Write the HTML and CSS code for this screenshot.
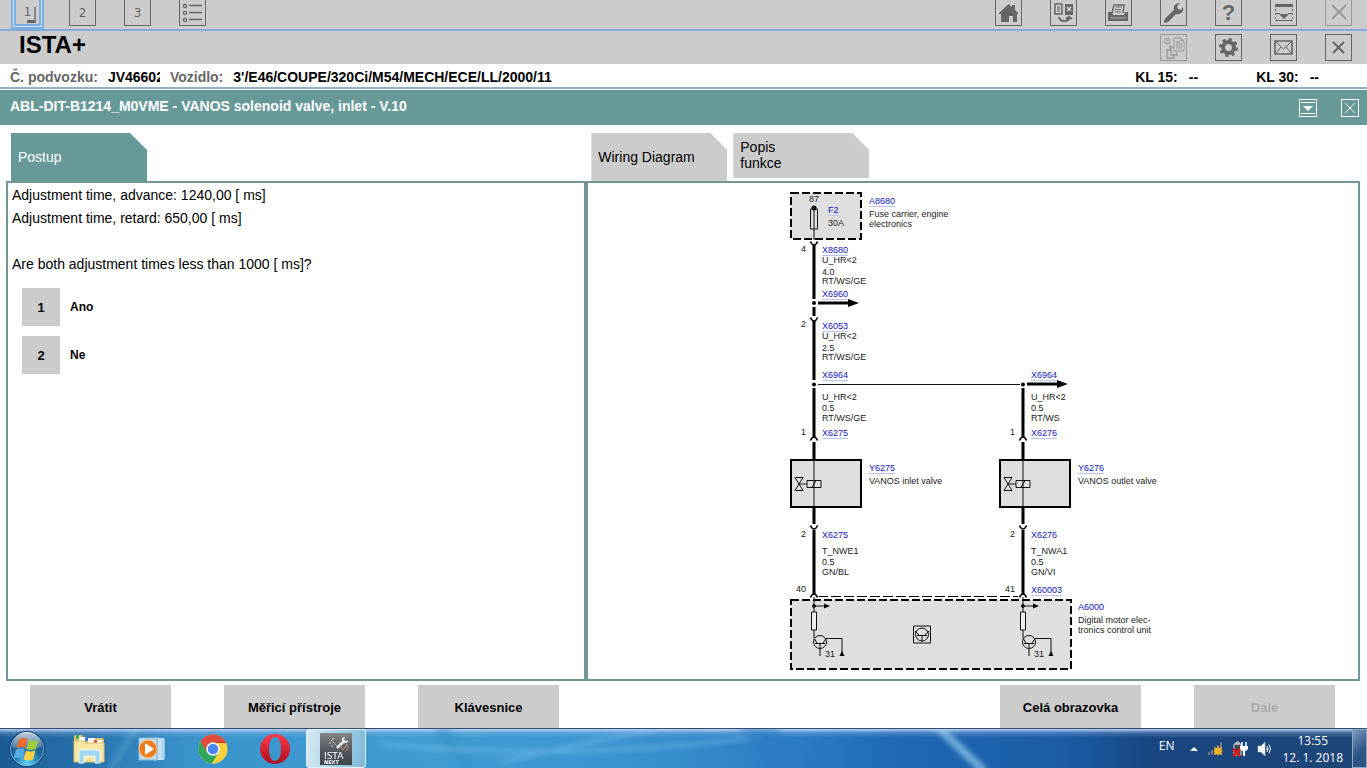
FILE: index.html
```html
<!DOCTYPE html>
<html lang="cs">
<head>
<meta charset="utf-8">
<title>ISTA+</title>
<meta name="viewport" content="width=device-width, initial-scale=1">
<link rel="stylesheet" href="styles.css">
</head>
<body>
<header>
  <div class="toolbar toolbar-top">
    <div class="tools">
      <button class="tool tool-active" type="button">1<span class="corner"></span></button>
      <button class="tool" type="button">2</button>
      <button class="tool" type="button">3</button>
      <button class="tool" type="button" aria-label="List">
        <svg class="icon" viewBox="0 0 25 25"><g fill="none" stroke="#666" stroke-width="1.3"><circle cx="5" cy="6" r="1.6"/><circle cx="5" cy="13" r="1.6"/><circle cx="5" cy="20" r="1.6"/><path d="M9 5.500h13M9 12.500h13M9 19.500h13"/></g></svg>
      </button>
    </div>
    <div class="tools">
      <button class="tool" type="button" aria-label="Home">
        <svg class="icon" viewBox="0 0 25 25"><path d="M12.500 4 3 13v1h2v8h8v-6h4v6h4v-8h1v-1l-3-3V5h-3v2z" fill="#666"/><path d="M14 16h3v3h-3z" fill="#ccc"/></svg>
      </button>
      <button class="tool" type="button" aria-label="Switch">
        <svg class="icon" viewBox="0 0 25 25"><path d="M4 4h7v10H4z" fill="none" stroke="#666" stroke-width="1.500"/><path d="M6 7h3M6 9h3M6 11h3" stroke="#666"/><path d="M14 4h8v11h-8z" fill="#666"/><path d="m16 7 4 4m0-4-4 4" stroke="#ddd" stroke-width="1.300"/><path d="M8 17q1 4 5 4 5 0 5-3M15 19l3-2 3 2" fill="none" stroke="#666" stroke-width="2"/></svg>
      </button>
      <button class="tool" type="button" aria-label="Print">
        <svg class="icon" viewBox="0 0 25 25"><path d="M6 13 8 5h10l-1 8" fill="none" stroke="#666" stroke-width="1.500"/><path d="M10 7h6M9 9.500h6M9 12h6" stroke="#666"/><path d="M2 12h4l1 3h11l1-3h3v9H2z" fill="#666"/><path d="M4 18h16" stroke="#aaa"/></svg>
      </button>
      <button class="tool" type="button" aria-label="Tools">
        <svg class="icon" viewBox="0 0 25 25"><path d="M4 18.500 13 10q-1-4 2-6 2-1.500 4-1l-3 3 1 3 3 1 2-3q1 4-2 6t-5 1l-8 8-3 1-1-1z" fill="#666"/></svg>
      </button>
      <button class="tool tool-help" type="button">?</button>
      <button class="tool" type="button" aria-label="Minimize">
        <svg class="icon" viewBox="0 0 25 25"><path d="M4 4h18v3H4zM8 14h10l-5 5z" fill="#666"/><path d="M4.500 9v11M21.500 9v11" stroke="#666" stroke-dasharray="2 2"/><path d="M4 13.500h5m8 0h5M4 20.500h18" stroke="#666"/></svg>
      </button>
      <button class="tool tool-disabled" type="button" aria-label="Close session" disabled>
        <svg class="icon" viewBox="0 0 25 25"><path d="m6 5 14 14m0-14L6 19" stroke="#999" stroke-width="2"/></svg>
      </button>
    </div>
  </div>
  <div class="toolbar toolbar-brand">
    <h1 class="brand">ISTA+</h1>
    <div class="tools">
      <button class="tool tool-disabled" type="button" aria-label="History" disabled>
        <svg class="icon" viewBox="0 0 25 25"><g fill="none" stroke="#999"><circle cx="6" cy="6" r="3"/><path d="M6 4v2h2M13 3h7l3 3v10H13zM20 3v3h3M15 7h4M15 9h6M15 11h6M15 13h6"/><path d="M13 12h-3v8h6v-3M10 15H6v8h7v-3M9 10v5" stroke-width="1.300"/></g></svg>
      </button>
      <button class="tool" type="button" aria-label="Settings">
        <svg class="icon" viewBox="0 0 25 25"><circle cx="12.500" cy="12.500" r="5.500" fill="none" stroke="#666" stroke-width="4"/><circle cx="12.500" cy="12.500" r="8" fill="none" stroke="#666" stroke-width="3" stroke-dasharray="3.140 3.140"/></svg>
      </button>
      <button class="tool" type="button" aria-label="Message">
        <svg class="icon" viewBox="0 0 25 25"><path d="M4 6h17v13H4z" fill="none" stroke="#666" stroke-width="1.600"/><path d="m4 6 8.500 8L21 6M5 18l5-6m10 6-5-6" fill="none" stroke="#666"/></svg>
      </button>
      <button class="tool" type="button" aria-label="Close">
        <svg class="icon" viewBox="0 0 25 25"><path d="m7 7 11 11m0-11L7 18" stroke="#666" stroke-width="2"/></svg>
      </button>
    </div>
  </div>
  <div class="info">
    <span class="info-label">Č. podvozku:</span>
    <span class="info-vin">JV46602</span>
    <span class="info-label">Vozidlo:</span>
    <span class="info-car">3'/E46/COUPE/320Ci/M54/MECH/ECE/LL/2000/11</span>
    <span class="info-kl">KL 15:<span>--</span></span>
    <span class="info-kl">KL 30:<span>--</span></span>
  </div>
  <div class="titlebar">
    <h2 class="title">ABL-DIT-B1214_M0VME - VANOS solenoid valve, inlet - V.10</h2>
    <div class="title-actions">
      <button class="small-tool" type="button" aria-label="Collapse">
        <svg class="icon" viewBox="0 0 16 16"><path d="M1 2.500h14M1 13.500h14" stroke="#fff"/><path d="M3 6h10l-5 5z" fill="#fff"/></svg>
      </button>
      <button class="small-tool" type="button" aria-label="Close document">
        <svg class="icon" viewBox="0 0 16 16"><path d="m3 3 10 10m0-10L3 13" stroke="#fff"/></svg>
      </button>
    </div>
  </div>
</header>

<main class="work">
  <section class="column">
    <div class="tabs"><button class="tab tab-active" type="button">Postup</button></div>
    <div class="panel steps">
      <p>Adjustment time, advance: 1240,00 [ ms]</p>
      <p>Adjustment time, retard: 650,00 [ ms]</p>
      <p class="question">Are both adjustment times less than 1000 [ ms]?</p>
      <div class="answer"><button class="answer-key" id="a1" type="button">1</button><label for="a1">Ano</label></div>
      <div class="answer"><button class="answer-key" id="a2" type="button">2</button><label for="a2">Ne</label></div>
    </div>
  </section>
  <section class="column">
    <div class="tabs">
      <button class="tab" type="button">Wiring Diagram</button>
      <button class="tab tab-short" type="button">Popis<br>funkce</button>
    </div>
    <div class="panel diagram">
      <svg class="wiring" viewBox="773 183 400 496" role="img" aria-label="Wiring Diagram">
        <defs>
          <g id="cup"><path d="M-5-4h10v5H-5z" fill="#fff"/><path d="M-3.500-2.500Q-2 1 0 1T3.500-2.500" fill="none" stroke="#000" stroke-width="1.600"/></g>
          <g id="cap"><path d="M-5-1h10v5H-5z" fill="#fff"/><path d="M-3.500 2.500Q-2-1 0-1T3.500 2.500" fill="none" stroke="#000" stroke-width="1.600"/></g>
          <g id="valve">
            <path d="M-23 0h70v47h-70z" fill="#dfdfdf" stroke="#000" stroke-width="2"/>
            <path d="M0 0v47M-19 17.500h8l-8 13h8zM-15 24h8M-7 20.500H7v7H-7zM-2 27.500l4-7" fill="none" stroke="#111"/>
          </g>
          <g id="driver" fill="none" stroke="#111">
            <path d="M0-3v15M0 30v8l3 5M0 6h11"/><path d="M10 3.500v5l6-2.500z" fill="#000" stroke="none"/><circle cy="6" r="1.500" fill="#000"/>
            <path d="M-2.500 12h5v18h-5z" fill="#eee"/><circle cx="6" cy="42" r="6.500"/>
            <path d="M1 43.500h10M6 43.500V56M9 43l3-4.500h16V54"/><path d="m25.500 56 2.500-5 2.500 5z" fill="#000" stroke="none"/>
          </g>
          <g id="branch"><path d="M4 0h31" stroke="#000" stroke-width="3"/><path d="M34-4v8l11-4z" fill="#000"/></g>
        </defs>
        <path d="M791 193h70v46h-70z" class="unit"/>
        <path d="M791 600h280v69H791z" class="unit"/>
        <path d="M818 596.500h202" fill="none" stroke="#000" stroke-dasharray="10 3"/>
        <path d="M810.500 209h7v20h-7zM814 207v35" fill="none" stroke="#111"/><circle cx="814" cy="208" r="2.500"/>
        <path d="M814 245v54M814 307v9M814 321v59M814 388v49M814 441v19M814 508v17M814 530v64M1023 388v49M1023 441v19M1023 508v17M1023 530v64" stroke="#000" stroke-width="3"/>
        <circle cx="814" cy="303" r="2"/><circle cx="814" cy="384.500" r="2"/><circle cx="1023" cy="384.500" r="2"/>
        <path d="M818 384.500h202" stroke="#111"/>
        <use href="#branch" x="814" y="303"/><use href="#branch" x="1023" y="384"/>
        <use href="#cup" x="814" y="244"/><use href="#cup" x="814" y="320"/><use href="#cup" x="814" y="528"/><use href="#cup" x="1023" y="528"/>
        <use href="#cap" x="814" y="438"/><use href="#cap" x="1023" y="438"/><use href="#cap" x="814" y="595"/><use href="#cap" x="1023" y="595"/>
        <use href="#valve" x="814" y="460"/><use href="#valve" x="1023" y="460"/>
        <use href="#driver" x="814" y="600"/><use href="#driver" x="1023" y="600"/>
        <g fill="none" stroke="#111"><path d="M913.500 626h17v17h-17z"/><circle cx="922" cy="634.500" r="6.500"/><path d="M917 635.500h10M922 635.500v6M919 635l-4-4M925 635l4-4"/></g>
        <g class="note">
          <text x="809" y="202">87</text><text x="828" y="226">30A</text>
          <text x="869" y="217">Fuse carrier, engine</text><text x="869" y="227">electronics</text>
          <text x="801" y="252">4</text><text x="822" y="263">U_HR&lt;2</text><text x="822" y="275">4.0</text><text x="822" y="284">RT/WS/GE</text>
          <text x="801" y="327">2</text><text x="822" y="339">U_HR&lt;2</text><text x="822" y="351">2.5</text><text x="822" y="360">RT/WS/GE</text>
          <text x="822" y="400">U_HR&lt;2</text><text x="822" y="411">0.5</text><text x="822" y="421">RT/WS/GE</text>
          <text x="1031" y="400">U_HR&lt;2</text><text x="1031" y="411">0.5</text><text x="1031" y="421">RT/WS</text>
          <text x="801" y="435">1</text><text x="1010" y="435">1</text>
          <text x="869" y="484">VANOS inlet valve</text><text x="1078" y="484">VANOS outlet valve</text>
          <text x="801" y="537">2</text><text x="1010" y="537">2</text>
          <text x="822" y="554">T_NWE1</text><text x="822" y="565">0.5</text><text x="822" y="575">GN/BL</text>
          <text x="1031" y="554">T_NWA1</text><text x="1031" y="565">0.5</text><text x="1031" y="575">GN/VI</text>
          <text x="796" y="592">40</text><text x="1005" y="592">41</text>
          <text x="825" y="657">31</text><text x="1034" y="657">31</text>
          <text x="1078" y="623">Digital motor elec-</text><text x="1078" y="633">tronics control unit</text>
        </g>
        <g class="ref">
          <a href="#F2"><text x="828" y="213">F2</text></a>
          <a href="#A8680"><text x="869" y="204">A8680</text></a>
          <a href="#X8680"><text x="822" y="253">X8680</text></a>
          <a href="#X6960"><text x="822" y="297">X6960</text></a>
          <a href="#X6053"><text x="822" y="329">X6053</text></a>
          <a href="#X6964"><text x="822" y="378">X6964</text></a>
          <a href="#X6964"><text x="1031" y="378">X6964</text></a>
          <a href="#X6275"><text x="822" y="436">X6275</text></a>
          <a href="#X6276"><text x="1031" y="436">X6276</text></a>
          <a href="#Y6275"><text x="869" y="471">Y6275</text></a>
          <a href="#Y6276"><text x="1078" y="471">Y6276</text></a>
          <a href="#X6275"><text x="822" y="538">X6275</text></a>
          <a href="#X6276"><text x="1031" y="538">X6276</text></a>
          <a href="#X60003"><text x="1031" y="593">X60003</text></a>
          <a href="#A6000"><text x="1078" y="610">A6000</text></a>
        </g>
        <path d="M828 215.500h11M869 206.500h26M822 255.500h26M822 299.500h26M822 331.500h26M822 380.500h26M1031 380.500h26M822 438.500h26M1031 438.500h26M869 473.500h26M1078 473.500h26M1031 595.500h31" stroke="#b9c6f2"/>
      </svg>
    </div>
  </section>
</main>

<footer class="actions">
  <div class="action-group">
    <button class="action" type="button">Vrátit</button>
    <button class="action" type="button">Měřicí přístroje</button>
    <button class="action" type="button">Klávesnice</button>
  </div>
  <div class="action-group">
    <button class="action" type="button">Celá obrazovka</button>
    <button class="action" type="button" disabled>Dále</button>
  </div>
</footer>

<nav class="taskbar">
  <svg class="streaks" viewBox="0 0 1367 40" preserveAspectRatio="none" aria-hidden="true">
    <defs><filter id="soft"><feGaussianBlur stdDeviation="3"/></filter></defs>
    <g filter="url(#soft)" fill="none" stroke="#8fd0f5">
      <path d="M110 42 135 0" stroke-width="4" opacity=".4"/><path d="M440 0 470 40" stroke="#2a86bd" stroke-width="12" opacity=".4"/>
      <path d="M500 34Q600 10 660 0M380 15Q560 34 760 8" stroke-width="4" opacity=".4"/>
      <path d="m740 0 30 44 40-4-34-40z" fill="#2b7ac5" stroke="none" opacity=".6"/>
      <path d="m940 0 45 44" stroke="#b5e2ff" stroke-width="8" opacity=".6"/>
    </g>
  </svg>
  <div class="launchers">
    <button class="launch launch-start" type="button" aria-label="Start">
      <svg width="38" height="38" viewBox="0 0 38 38">
        <defs>
          <radialGradient id="orb" cx=".5" cy=".9" r=".9"><stop offset="0" stop-color="#59d5f5"/><stop offset=".45" stop-color="#1b6ba4"/><stop offset="1" stop-color="#174870"/></radialGradient>
          <linearGradient id="gloss" x2="0" y2="1"><stop offset="0" stop-color="#fff" stop-opacity=".75"/><stop offset="1" stop-color="#fff" stop-opacity=".15"/></linearGradient>
        </defs>
        <circle cx="19" cy="19" r="17.500" fill="url(#orb)" stroke="#0d3d66"/><circle cx="19" cy="19" r="16.500" fill="none" stroke="#9fc9e6" opacity=".7"/>
        <path d="M4 17a15 15 0 0 1 30 0Q19 22 4 17z" fill="url(#gloss)"/>
        <path d="M11 9q4-2 8.500 0l-2.500 9q-4-2-8.500 0z" fill="#ee6a2c"/><path d="M21 10q4 2 9.500 0l-2.500 9q-5 2-9.500 0z" fill="#9ccc3c"/>
        <path d="M8 19.500q4-2 8.500 0l-2.500 9q-4-2-8.500 0z" fill="#55aee8"/><path d="M18 20.500q4 2 9.500 0l-2.500 9q-5 2-9.500 0z" fill="#fbd041"/>
      </svg>
    </button>
    <button class="launch" type="button" aria-label="Explorer">
      <svg width="34" height="32" viewBox="0 0 34 32">
        <path d="M2 4q0-2 2-2h6l2 3h18q2 0 2 2v18H2z" fill="#e3c46a"/><path d="M7 4h7v5H7zM16 5h7v5h-7zM24 7h6v4h-6z" fill="#fff"/><path d="M4 2h3v4H4z" fill="#3fae49"/><path d="M13 5h3v3h-3z" fill="#3a78d0"/><path d="M22 7h3v3h-3z" fill="#d4503c"/>
        <path d="M2 8h10l2 2h18v19H2z" fill="#f8e7a4" stroke="#d9bd67"/><path d="M7 30V19q0-2 2-2h17q2 0 2 2v11h-5v-7H12v7z" fill="#9fd7f3" stroke="#e7f7ff"/>
      </svg>
    </button>
    <button class="launch" type="button" aria-label="Media player">
      <svg width="28" height="26" viewBox="0 0 28 26">
        <path d="m17 2 10 1v20l-10 1z" fill="#9ccbea" stroke="#e6f4fc"/><path d="M2 2h18v22H2z" fill="#bddcf0" stroke="#8db8d5"/><path d="M22 3v20M24 3v20" stroke="#e9f5fc"/>
        <circle cx="11" cy="13" r="9" fill="#ef7c1c" stroke="#fbc27d"/><path d="m8 7 9 6-9 6z" fill="#fff"/>
      </svg>
    </button>
    <button class="launch" type="button" aria-label="Chrome">
      <svg width="30" height="30" viewBox="0 0 30 30">
        <circle cx="15" cy="15" r="14.500" fill="#fdd23c"/><path d="M2.400 7.800A14.500 14.500 0 0 1 27.600 7.800L28 8.500H15L9 18.500z" fill="#e04a3c"/>
        <path d="M2.400 7.800A14.500 14.500 0 0 0 14 29.500l6.500-11h-11z" fill="#2fa65a"/>
        <path d="M15 8.500h13" stroke="#b73a2e"/><circle cx="15" cy="15" r="6.800" fill="#fff"/><circle cx="15" cy="15" r="5.300" fill="#4c86ee"/>
      </svg>
    </button>
    <button class="launch" type="button" aria-label="Opera">
      <svg width="30" height="30" viewBox="0 0 30 30">
        <defs><linearGradient id="opera" x2="0" y2="1"><stop offset="0" stop-color="#ff3b4b"/><stop offset="1" stop-color="#ad0b1c"/></linearGradient></defs>
        <path fill-rule="evenodd" d="M15 0a15 15 0 1 0 0 30 15 15 0 0 0 0-30zm0 3c4 0 6 5 6 12s-2 12-6 12-6-5-6-12 2-12 6-12z" fill="url(#opera)"/>
      </svg>
    </button>
    <button class="launch launch-running" type="button" aria-label="ISTA NEXT">
      <svg width="32" height="32" viewBox="0 0 32 32">
        <defs><linearGradient id="tile" x2="0" y2="1"><stop offset="0" stop-color="#858585"/><stop offset=".5" stop-color="#555b60"/><stop offset="1" stop-color="#3e454b"/></linearGradient></defs>
        <path d="M0 0h32v32H0z" fill="url(#tile)"/><path d="m16 14 6-6q-1-4 3-4l-1 3 2 1 2-1q0 4-4 3l-6 6z" fill="#e5e5e5"/>
        <path d="m11 7 7 7M9 10h3m1-5v3m-2 5h3" stroke="#d8d8d8" stroke-dasharray="2 1"/><path d="m20 12 3 5 4-6v7" fill="none" stroke="#c58b6a"/>
        <text x="4" y="26" class="tile-name">ISTA</text><text x="4" y="31" class="tile-sub">NEXT</text>
      </svg>
    </button>
  </div>
  <div class="tray">
    <span class="lang">EN</span>
    <svg width="8" height="5" viewBox="0 0 8 5"><path d="M0 5h8L4 1z" fill="#fff"/></svg>
    <svg width="16" height="16" viewBox="0 0 16 16"><path d="M1 11h2v3H1zM4 9h2v5H4zM7 7h2v7H7zM10 4h2v10h-2zM13 1h2v13h-2z" fill="#8793a0" stroke="#33475e" stroke-width=".5"/><path d="m11 5 1 2 3-1-1 3 2 1-2 1 1 3-3-1-1 2-1-2-3 1 1-3-2-1 2-1-1-3 3 1z" fill="#f8b323"/></svg>
    <svg width="16" height="16" viewBox="0 0 16 16"><path d="M2 3h7v11H2zM4 1h3v2H4z" fill="#445" stroke="#ddd"/><path d="M10 1v4m4-4v4" stroke="#fff" stroke-width="1.500"/><path d="M8 5h8v3q-1 2-3 2v5h-2v-5q-2 0-3-2z" fill="#fff"/><path d="m1 8 7 7m0-7-7 7" stroke="#d81818" stroke-width="2.600"/></svg>
    <svg width="16" height="16" viewBox="0 0 16 16"><path d="M1 5h3l4-4v14l-4-4H1z" fill="#fff" stroke="#b8c4d0" stroke-width=".5"/><path d="M10 5q2 3 0 6M12 3.500q3 4.500 0 9M10 7v2" fill="none" stroke="#fff"/></svg>
    <div class="clock"><span>13:55</span><span>12. 1. 2018</span></div>
    <button class="peek" type="button" aria-label="Show desktop"></button>
  </div>
</nav>
</body>
</html>
```
FILE: styles.css
```css
* { box-sizing: border-box; }
body {
  margin: 0;
  min-height: 100vh;
  display: flex;
  flex-direction: column;
  background: #fff;
  color: #000;
  font: 14px/16px "Liberation Sans", Arial, sans-serif;
}
button { font: inherit; color: inherit; padding: 0; border: 0; background: none; }
h1, h2, p { margin: 0; }
svg { display: block; flex: none; }

.toolbar { display: flex; justify-content: space-between; background: #ccc; padding-right: 15px; }
.toolbar-top { height: 31px; padding-left: 14px; border-bottom: 2px solid #7faadb; overflow: hidden; }
.toolbar-brand { height: 33px; padding: 3px 15px 0 19px; }
.tools { display: flex; gap: 28px; }
.tool {
  width: 27px;
  height: 27px;
  border: 1px solid #666;
  color: #666;
  font: 12px/24px "DejaVu Sans", sans-serif;
  display: grid;
  place-items: center;
}
.toolbar-top .tool { height: 26px; border-top: 0; }
.tool-disabled { border-color: #999; }
.toolbar-top .tool-help { font: bold 22px/24px "Liberation Sans", Arial, sans-serif; }
.toolbar-top .tool-active {
  position: relative;
  border: 2px solid #7aaee6;
  border-top: 0;
  box-shadow: 0 0 0 1px #d5e6f8, 0 0 0 3px #7aaee6;
}
.corner { position: absolute; right: 3px; bottom: 1px; width: 9px; height: 16px; border-right: 2px solid #888; border-bottom: 3px solid #666; }
.icon { width: 25px; height: 25px; }
.brand { font-size: 24px; line-height: 22px; }

.info {
  display: flex;
  align-items: center;
  height: 25px;
  padding: 2px 48px 0 10px;
  font-size: 14px;
  font-weight: bold;
  border-bottom: 2px solid #8fb2cb;
  white-space: nowrap;
}
.info-label { color: #666; margin-right: 10px; }
.info-vin { width: 52px; margin-right: 10px; overflow: hidden; }
.info-car { margin-right: auto; }
.info-kl { margin-left: 58px; }
.info-kl span { margin-left: 11px; }

.titlebar {
  display: flex;
  justify-content: space-between;
  align-items: center;
  height: 35px;
  margin-top: 1px;
  padding: 0 8px 0 10px;
  background: #689999;
  color: #fff;
}
.title { font-size: 14px; line-height: 16px; padding-bottom: 4px; }
.title-actions { display: flex; gap: 24px; }
.small-tool { width: 18px; height: 18px; border: 1px solid #fff; }
.small-tool .icon { width: 16px; height: 16px; }

.work { flex: 1; display: grid; grid-template-columns: 3fr 4fr; padding: 8px 7px 4px 6px; }
.column { display: flex; flex-direction: column; min-width: 0; }
.tabs { display: flex; align-items: flex-start; gap: 6px; padding-left: 5px; height: 48px; }
.tab {
  width: 136px;
  height: 48px;
  padding-left: 7px;
  text-align: left;
  background: #ccc;
  clip-path: polygon(0 0, 119px 0, 100% 17px, 100% 100%, 0 100%);
}
.tab-active { background: #689999; color: #fff; }
.tab-short { height: 45px; padding-bottom: 2px; }
.panel { flex: 1; border: 2px solid #739696; }
.steps { padding: 1px 4px; line-height: 23px; }
.question { margin-top: 23px; }
.answer { display: flex; align-items: center; gap: 10px; margin: 12px 0 0 10px; font-size: 12px; font-weight: bold; }
.answer + .answer { margin-top: 10px; }
.answer-key { width: 38px; height: 38px; background: #ccc; font-size: 13px; }
.diagram { display: flex; justify-content: center; align-items: flex-start; }
.wiring { width: 400px; height: 496px; font: 9px "Liberation Sans", Arial, sans-serif; }
.unit { fill: #dfdfdf; stroke: #000; stroke-width: 2; stroke-dasharray: 8 3; }
.note { fill: #222; }
.ref { fill: #1414c4; }

.actions { display: flex; justify-content: space-between; padding: 0 32px 0 30px; }
.action-group { display: flex; gap: 53px; }
.action { width: 141px; height: 43px; padding-top: 2px; background: #ccc; font-size: 13px; font-weight: bold; }
.action:disabled { color: #aaa; }

.taskbar {
  position: relative;
  display: flex;
  justify-content: space-between;
  height: 40px;
  border-top: 1px solid #34506f;
  color: #fff;
  font: 12px/17px "Open Sans", "Noto Sans", sans-serif;
  background:
    linear-gradient(#b9cdf0, rgba(150, 190, 235, 0.3) 4px, transparent 9px),
    linear-gradient(90deg, #1c5a94, #2c7ab4 8%, #3a94cc 14%, #3f9dd3 32%, #3a93cf 46%, #2b7dc4 58%, #1f68b2 66%, #1a5ca6 78%, #184681 84%, #1f4677);
}
.streaks { position: absolute; inset: 0; width: 100%; height: 100%; }
.launchers, .tray { position: relative; display: flex; align-items: center; }
.launchers { padding-left: 8px; }
.launch { display: grid; place-items: center; width: 62px; height: 39px; }
.launch-start { width: 38px; margin-right: 12px; }
.launch-running {
  width: 60px;
  border: 1px solid #e4f3fc;
  border-radius: 3px;
  background: linear-gradient(100deg, #d9ebf5, #a9cfe5 50%, #7db8da);
}
.tile-name { font: 9px "DejaVu Sans", sans-serif; fill: #fff; }
.tile-sub { font: bold 5px "DejaVu Sans", sans-serif; fill: #fff; }
.tray { gap: 9px; }
.lang { margin-right: 7px; padding-bottom: 6px; }
.clock { display: flex; flex-direction: column; align-items: center; }
.peek { width: 15px; height: 39px; border: 1px solid #8fa9c4; background: linear-gradient(135deg, #7f9bbb, #2c5585 60%); }
```
